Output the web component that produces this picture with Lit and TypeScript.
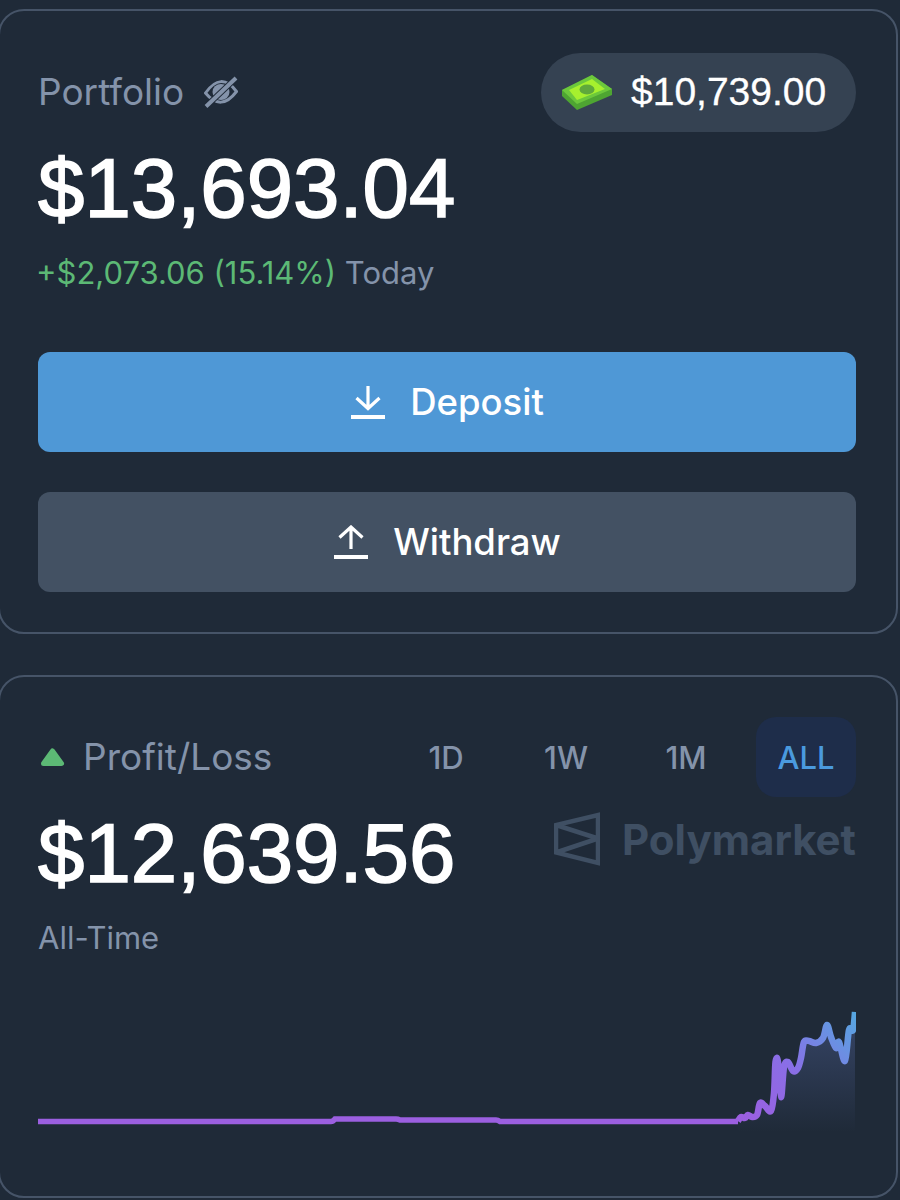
import {LitElement, html, css, svg} from 'lit';
import {customElement} from 'lit/decorators.js';

// flat part of the chart, then the rally traced from the reference
const FLAT = 'M38 1121.5H331Q333 1121.5 335 1119H396Q398 1119 400 1120H496Q498 1120 500 1121.5H738';
const RALLY: [number, number][] = [
  [738, 1121], [741, 1117], [745, 1118], [748, 1115], [752, 1117], [757, 1115], [760, 1103],
  [765, 1106], [771, 1111], [774, 1093], [775.5, 1062], [778, 1062], [781, 1097], [784, 1067],
  [788, 1062], [793, 1071], [798, 1068], [801, 1058], [804, 1042], [809, 1041], [816, 1043],
  [823, 1038], [827, 1025], [831, 1037], [836, 1048], [839, 1042], [845, 1061], [849, 1030],
  [853, 1030], [855, 1012],
];

const smooth = (pts: [number, number][]) => {
  let d = `L${pts[0][0]} ${pts[0][1]}`;
  for (let i = 0; i < pts.length - 1; i++) {
    const p0 = pts[Math.max(i - 1, 0)];
    const p1 = pts[i];
    const p2 = pts[i + 1];
    const p3 = pts[Math.min(i + 2, pts.length - 1)];
    const c1x = p1[0] + (p2[0] - p0[0]) / 6;
    const c1y = p1[1] + (p2[1] - p0[1]) / 6;
    const c2x = p2[0] - (p3[0] - p1[0]) / 6;
    const c2y = p2[1] - (p3[1] - p1[1]) / 6;
    d += `C${c1x} ${c1y} ${c2x} ${c2y} ${p2[0]} ${p2[1]}`;
  }
  return d;
};

const RALLY_PATH = smooth(RALLY);

@customElement('app-root')
export class AppRoot extends LitElement {
  static styles = css`
    :host {
      display: block;
      height: 1200px;
      overflow: hidden;
      background: #1f2a38;
      padding-top: 9px;
      box-sizing: border-box;
      font-family: 'Inter', 'Liberation Sans', sans-serif;
      color: #8493aa;
    }
    .card {
      width: 900px;
      margin-left: -2px;
      box-sizing: border-box;
      border: 2px solid #465468;
      border-radius: 26px;
      padding: 41px 40px 40px 38px;
    }
    .card + .card {
      margin-top: 41px;
      padding-top: 40px;
      height: 523px;
    }
    .top {
      display: flex;
      justify-content: space-between;
      align-items: center;
    }
    .label {
      display: flex;
      align-items: center;
      gap: 20px;
      font-size: 37px;
      line-height: 80px;
    }
    .pill {
      display: flex;
      align-items: center;
      gap: 18px;
      height: 79px;
      width: 315px;
      box-sizing: border-box;
      padding-left: 20px;
      border-radius: 40px;
      background: #354252;
      color: #fff;
      font: 39px 'Liberation Sans', sans-serif;
      -webkit-text-stroke: 0.3px #fff;
    }
    .amount {
      font: 83.4px/83px 'Liberation Sans', sans-serif;
      color: #fff;
      -webkit-text-stroke: 1.6px #fff;
    }
    .hero {
      margin-top: 15px;
    }
    .change {
      margin: 25px 0 0 -2px;
      font-size: 31px;
      line-height: 36px;
      color: #8493aa;
    }
    .change span {
      color: #5cb975;
    }
    .btn {
      display: flex;
      align-items: center;
      justify-content: center;
      gap: 24px;
      height: 100px;
      border-radius: 12px;
      color: #fff;
      font-size: 36.5px;
      font-weight: 500;
    }
    .deposit {
      margin-top: 61px;
      background: #4f98d6;
    }
    .withdraw {
      margin-top: 40px;
      background: #435163;
    }
    .tabs {
      display: flex;
      gap: 20px;
    }
    .tab {
      width: 100px;
      height: 80px;
      display: flex;
      align-items: center;
      justify-content: center;
      border-radius: 20px;
      font-size: 31px;
      font-weight: 500;
    }
    .tab.active {
      background: #1e2d4a;
      color: #4a9ade;
    }
    .pnl {
      gap: 18px;
    }
    .tri {
      margin-left: 2px;
    }
    .value-row {
      display: flex;
      justify-content: space-between;
      align-items: flex-start;
      margin-top: 15px;
    }
    .mark {
      display: flex;
      align-items: center;
      gap: 22px;
      font-size: 42px;
      font-weight: 700;
      color: #3f4f63;
      line-height: 53px;
    }
    .period {
      margin-top: 24px;
      font-size: 31px;
      line-height: 38px;
    }
    .chart {
      display: block;
      margin-top: 43px;
    }
  `;

  render() {
    return html`
      <section class="card">
        <div class="top">
          <div class="label">
            Portfolio
            <svg width="34" height="32" viewBox="0 0 34 32">
              <path d="M1.5 17Q17 -5 32.5 15.5Q17 36 1.5 17Z" fill="none" stroke="#8493aa" stroke-width="3"/>
              <ellipse cx="17" cy="16" rx="8.5" ry="8" fill="#8493aa"/>
              <path d="M2 30.5L32 2" stroke="#1f2a38" stroke-width="6"/>
              <path d="M2 30.5L32 2" stroke="#8493aa" stroke-width="4"/>
            </svg>
          </div>
          <div class="pill">
            <svg width="52" height="38" viewBox="0 0 52 38">
              <path d="M1 17L31 2L51 16V22L16 37L1 23Z" fill="#4ea532"/>
              <path d="M1 17L31 2L51 16L16 31Z" fill="#6cc83c"/>
              <path d="M8 17L31 6L44 16L16 27Z" fill="#a6f02e"/>
              <ellipse cx="26" cy="16.5" rx="7.5" ry="5" fill="#5fa83c"/>
            </svg>
            $10,739.00
          </div>
        </div>
        <div class="amount hero">$13,693.04</div>
        <div class="change"><span>+$2,073.06 (15.14%)</span> Today</div>
        <div class="btn deposit">
          <svg width="36" height="34" viewBox="0 0 36 34" fill="none" stroke="#fff" stroke-width="3.2">
            <path d="M18 1V23M6.5 13L18 23.5L29.5 13"/>
            <path d="M1 32H35" stroke-width="4"/>
          </svg>
          Deposit
        </div>
        <div class="btn withdraw">
          <svg width="36" height="34" viewBox="0 0 36 34" fill="none" stroke="#fff" stroke-width="3.2">
            <path d="M18 24V2M6.5 12.5L18 2L29.5 12.5"/>
            <path d="M1 32H35" stroke-width="4"/>
          </svg>
          Withdraw
        </div>
      </section>

      <section class="card">
        <div class="top">
          <div class="label pnl">
            <svg class="tri" width="25" height="20" viewBox="0 0 25 20">
              <path d="M12.5 4L21.5 16.5H3.5Z" fill="#5cb975" stroke="#5cb975" stroke-width="5" stroke-linejoin="round"/>
            </svg>
            Profit/Loss
          </div>
          <div class="tabs">
            ${['1D', '1W', '1M', 'ALL'].map(t => html`<div class="tab ${t === 'ALL' ? 'active' : ''}">${t}</div>`)}
          </div>
        </div>
        <div class="value-row">
          <div class="amount">$12,639.56</div>
          <div class="mark">
            <svg width="46" height="54" viewBox="0 0 46 54" fill="none" stroke="#3f4f63" stroke-width="4.5" stroke-linejoin="miter">
              <path d="M44 3V51L2 40.5V13L44 3ZM44 26.5L2 13M44 26.5L2 40.5"/>
            </svg>
            Polymarket
          </div>
        </div>
        <div class="period">All-Time</div>
        <svg class="chart" width="818" height="140" viewBox="38 1000 818 140">
          <defs>
            <linearGradient id="line" gradientUnits="userSpaceOnUse" x1="745" y1="1120" x2="856" y2="1015">
              <stop offset="0" stop-color="#9b5fe0"/>
              <stop offset="0.45" stop-color="#8a6ee6"/>
              <stop offset="1" stop-color="#56a6e0"/>
            </linearGradient>
            <linearGradient id="area" x1="0" y1="0" x2="0" y2="1">
              <stop offset="0" stop-color="#3f4f78" stop-opacity="0.75"/>
              <stop offset="1" stop-color="#3f4f78" stop-opacity="0"/>
            </linearGradient>
          </defs>
          ${svg`<path d="M738 1132${RALLY_PATH}V1132Z" fill="url(#area)"/>`}
          <path d=${FLAT} fill="none" stroke="#9b5fe0" stroke-width="5.5"/>
          <path d="M738 1121.5${RALLY_PATH}" fill="none" stroke="url(#line)" stroke-width="6.5" stroke-linejoin="round"/>
        </svg>
      </section>
    `;
  }
}
